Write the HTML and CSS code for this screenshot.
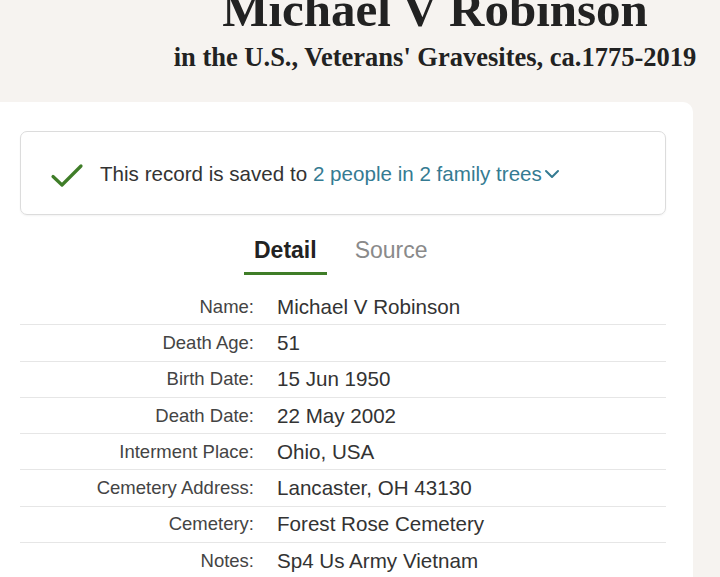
FILE: index.html
```html
<!DOCTYPE html>
<html>
<head>
<meta charset="utf-8">
<link rel="stylesheet" href="styles.css">
</head>
<body>
<header class="hdr">
  <h1 class="title">Michael V Robinson</h1>
  <div class="subtitle">in the U.S., Veterans' Gravesites, ca.1775-2019</div>
</header>
<main class="card">
  <div class="saved">
    <svg class="check" width="34" height="26" viewBox="0 0 34 26"><path d="M3 13.5 L12 22 L31 3" fill="none" stroke="#3f7d28" stroke-width="3.2" stroke-linecap="round" stroke-linejoin="round"/></svg>
    <span class="saved-text">This record is saved to <span class="link">2 people in 2 family trees<svg class="chev" width="16" height="10" viewBox="0 0 16 10"><path d="M2 2 L8 8 L14 2" fill="none" stroke="#357b92" stroke-width="2" stroke-linecap="round" stroke-linejoin="round"/></svg></span></span>
  </div>
  <nav class="tabs">
    <span class="tab active">Detail</span>
    <span class="tab">Source</span>
  </nav>
  <div class="rows">
    <div class="row"><span class="lbl">Name:</span><span class="val">Michael V Robinson</span></div>
    <div class="row"><span class="lbl">Death Age:</span><span class="val">51</span></div>
    <div class="row"><span class="lbl">Birth Date:</span><span class="val">15 Jun 1950</span></div>
    <div class="row"><span class="lbl">Death Date:</span><span class="val">22 May 2002</span></div>
    <div class="row"><span class="lbl">Interment Place:</span><span class="val">Ohio, USA</span></div>
    <div class="row"><span class="lbl">Cemetery Address:</span><span class="val">Lancaster, OH 43130</span></div>
    <div class="row"><span class="lbl">Cemetery:</span><span class="val">Forest Rose Cemetery</span></div>
    <div class="row"><span class="lbl">Notes:</span><span class="val">Sp4 Us Army Vietnam</span></div>
  </div>
</main>
</body>
</html>
```

FILE: styles.css
```css
html, body {
  margin: 0;
  padding: 0;
  background: #f6f3f0;
  overflow: hidden;
  height: 577px;
}
body {
  font-family: "Liberation Sans", Arial, sans-serif;
  color: #333;
}
.hdr {
  display: flow-root;
  height: 102px;
  padding-left: 150px;
  text-align: center;
  font-family: "Liberation Serif", "Times New Roman", serif;
  color: #222;
}
.title {
  margin: -15px 0 0 0;
  font-size: 49px;
  line-height: 49px;
  font-weight: bold;
  white-space: nowrap;
}
.subtitle {
  margin-top: 10px;
  font-size: 26.5px;
  line-height: 26px;
  font-weight: bold;
  white-space: nowrap;
}
.card {
  margin-left: -10px;
  width: 703px;
  height: 500px;
  background: #fff;
  border-radius: 0 10px 0 0;
  padding: 29px 0 0 30px;
  box-sizing: border-box;
}
.saved {
  width: 646px;
  height: 84px;
  box-sizing: border-box;
  border: 1px solid #dcdcdc;
  border-radius: 7px;
  display: flex;
  align-items: center;
  padding: 0 0 0 29px;
  box-shadow: 0 1px 2px rgba(0,0,0,0.05);
}
.check {
  margin-top: 6px;
  margin-right: 16px;
}
.saved-text {
  font-size: 20.6px;
  color: #333;
  margin-top: 1px;
}
.link {
  color: #357b92;
}
.chev {
  margin-left: 2px;
  vertical-align: 2px;
}
.tabs {
  display: flex;
  justify-content: flex-start;
  padding-left: 224px;
  gap: 18px;
  margin-top: 19px;
}
.tab {
  font-size: 23px;
  color: #8a8a8a;
  padding: 3px 10px 8px;
  border-bottom: 3px solid transparent;
}
.tab.active {
  color: #222;
  font-weight: bold;
  border-bottom-color: #3f7d28;
}
.rows {
  width: 646px;
  margin-top: 14px;
}
.row {
  display: grid;
  grid-template-columns: 234px 1fr;
  column-gap: 23px;
  align-items: center;
  height: 36.3px;
  box-sizing: border-box;
  border-bottom: 1px solid #e6e6e6;
}
.lbl {
  text-align: right;
  font-size: 18.5px;
  color: #444;
}
.val {
  font-size: 20.6px;
  color: #333;
}
```
